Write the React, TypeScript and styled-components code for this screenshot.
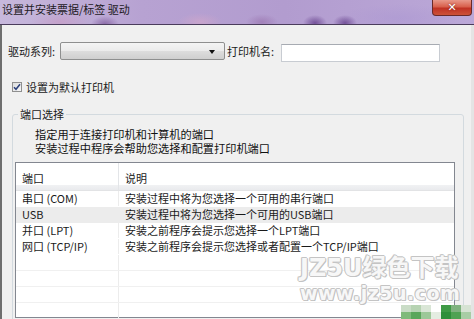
import React from "react";
import styled, { createGlobalStyle } from "styled-components";

const GlobalStyle = createGlobalStyle`
  html, body { margin: 0; padding: 0; background: #f0f0f0; }
  body { font-family: "Noto Sans CJK SC", "Liberation Sans", sans-serif; font-size: 11px; color: #1a1a1a; }
  * { box-sizing: border-box; }
`;

const Window = styled.div`
  width: 474px;
  height: 319px;
  overflow: hidden;
  display: flex;
  flex-direction: column;
  background: #f0f0f0;
`;

const TitleBar = styled.div`
  height: 25px;
  flex: none;
  display: flex;
  justify-content: space-between;
  align-items: flex-start;
  border-bottom: 1px solid #4a3c5c;
  background:
    radial-gradient(ellipse 14px 8px at 105px 24px, rgba(110, 70, 140, 0.6), transparent),
    radial-gradient(ellipse 12px 8px at 315px 23px, rgba(90, 50, 130, 0.7), transparent),
    radial-gradient(ellipse 12px 8px at 345px 23px, rgba(90, 50, 130, 0.7), transparent),
    radial-gradient(ellipse 16px 8px at 262px 22px, rgba(150, 110, 170, 0.6), transparent),
    radial-gradient(ellipse 30px 10px at 60px 22px, rgba(200, 150, 190, 0.55), transparent),
    radial-gradient(ellipse 22px 9px at 200px 22px, rgba(220, 170, 200, 0.5), transparent),
    radial-gradient(ellipse 60px 14px at 400px 18px, rgba(170, 150, 210, 0.5), transparent),
    linear-gradient(90deg, #c7b8dc 0%, #b7a2d2 30%, #b29ccf 60%, #bba8d8 100%);
`;

const Title = styled.div`
  padding: 3px 0 0 2px;
  font-size: 11px;
  line-height: 13px;
  color: #1e1a24;
`;

const CloseButton = styled.div`
  width: 40px;
  height: 16px;
  margin-right: 2px;
  border: 1px solid #6a2a28;
  border-top: none;
  border-radius: 0 0 4px 4px;
  background: linear-gradient(180deg, #e8988a 0%, #d8604c 45%, #c03224 55%, #cc5238 100%);
  display: flex;
  align-items: center;
  justify-content: center;
  color: #fff;
  font-family: "DejaVu Sans", sans-serif;
  font-weight: bold;
  font-size: 11px;
  line-height: 1;
  text-shadow: 0 0 2px #6a1a10;
`;

const Body = styled.div`
  flex: 1;
  position: relative;
  border-left: 2px solid #6e6e6e;
  border-right: 3px solid #e4e4e4;
  display: flex;
  flex-direction: column;
  overflow: hidden;
`;

const FieldRow = styled.div`
  display: flex;
  align-items: center;
  margin-top: 17px;
  padding-left: 6px;
  height: 18px;
`;

const Label = styled.span<{ $gap?: number }>`
  margin-left: ${(p) => p.$gap ?? 0}px;
  white-space: nowrap;
  line-height: 14px;
`;

const Combo = styled.div`
  width: 165px;
  height: 18px;
  margin-left: 5px;
  border: 1px solid #8e8f8f;
  border-radius: 2px;
  background: linear-gradient(180deg, #f4f4f4 0%, #ebebeb 50%, #dddddd 51%, #cfcfcf 100%);
  display: flex;
  align-items: center;
  justify-content: flex-end;
  padding-right: 9px;
`;

const Arrow = styled.div`
  width: 0;
  height: 0;
  border-left: 3px solid transparent;
  border-right: 3px solid transparent;
  border-top: 4px solid #111;
  margin-top: 1px;
`;

const TextInput = styled.div`
  width: 159px;
  height: 18px;
  margin-left: 7px;
  margin-top: 3px;
  background: #fff;
  border: 1px solid #c8ccd2;
  border-top-color: #a7abb2;
`;

const CheckRow = styled.div`
  display: flex;
  align-items: center;
  margin-top: 20px;
  padding-left: 10px;
  gap: 4px;
`;

const CheckBox = styled.div`
  width: 10px;
  height: 10px;
  border: 1px solid #8f8f8f;
  background: linear-gradient(135deg, #dcdcdc, #f6f6f6);
  display: flex;
  align-items: center;
  justify-content: center;
`;

const Group = styled.fieldset`
  margin: 14px 0 0 10px;
  padding: 0;
  width: 452px;
  border: 1px solid #d3dadf;
  border-radius: 3px;
  flex: none;
  height: 240px;
`;

const Legend = styled.legend`
  margin-left: 5px;
  padding: 0 2px;
  font-size: 11px;
  line-height: 13px;
`;

const Desc = styled.div`
  padding: 6px 0 0 22px;
  font-size: 11.2px;
  line-height: 14px;
  color: #111;
`;

const List = styled.div`
  margin: 7px 0 0 2px;
  width: 440px;
  height: 156px;
  border: 1px solid #838790;
  background: #fff;
  display: flex;
  flex-direction: column;
`;

const Header = styled.div`
  display: grid;
  grid-template-columns: 103px 1fr;
  height: 28px;
  flex: none;
  background: linear-gradient(180deg, #ffffff 0%, #ffffff 80%, #f1f2f4 81%, #e9eaed 100%);
  border-bottom: 1px solid #e2e3e5;
`;

const HeaderCell = styled.div<{ $sep?: boolean }>`
  display: flex;
  align-items: center;
  padding: 2px 0 0 6px;
  border-right: ${(p) => (p.$sep ? "1px solid #e3e5e8" : "none")};
`;

const Row = styled.div<{ $shade?: boolean; $line?: boolean }>`
  display: grid;
  grid-template-columns: 103px 1fr;
  height: 16px;
  flex: none;
  background: ${(p) => (p.$shade ? "#ececec" : "transparent")};
  border-bottom: 1px solid ${(p) => (p.$line ? "#f0f0f0" : "transparent")};
`;

const Cell = styled.div<{ $sep?: boolean }>`
  padding-left: 6px;
  line-height: 15px;
  white-space: nowrap;
  border-right: ${(p) => (p.$sep ? "1px solid #ececec" : "none")};
`;

const Watermark = styled.div`
  position: absolute;
  left: 298px;
  top: 229px;
  display: flex;
  flex-direction: column;
  align-items: flex-start;
  white-space: nowrap;
  pointer-events: none;
  font-family: "DejaVu Sans", "Noto Sans CJK SC", sans-serif;
  font-weight: bold;
  color: #f7f7f7;
  text-shadow: 1px 0 #c4c4c4, -1px 0 #c4c4c4, 0 1px #c4c4c4, 0 -1px #c4c4c4, 1px 1px #bdbdbd, -1px -1px #d0d0d0;
`;

const WmBig = styled.div`
  font-size: 24px;
  line-height: 28px;
`;

const WmSmall = styled.div`
  font-size: 19px;
  line-height: 22px;
  letter-spacing: 0.5px;
`;

const Mosaic = styled.svg`
  position: absolute;
  right: 0;
  bottom: 0;
`;

const rows = [
  { port: "串口 (COM)", desc: "安装过程中将为您选择一个可用的串行端口" },
  { port: "USB", desc: "安装过程中将为您选择一个可用的USB端口", shade: true },
  { port: "并口 (LPT)", desc: "安装之前程序会提示您选择一个LPT端口" },
  { port: "网口 (TCP/IP)", desc: "安装之前程序会提示您选择或者配置一个TCP/IP端口" },
];

export default function App() {
  return (
    <>
      <GlobalStyle />
      <Window>
        <TitleBar>
          <Title>设置并安装票据/标签 驱动</Title>
          <CloseButton>✕</CloseButton>
        </TitleBar>
        <Body>
          <FieldRow>
            <Label>驱动系列:</Label>
            <Combo>
              <Arrow />
            </Combo>
            <Label $gap={2}>打印机名:</Label>
            <TextInput />
          </FieldRow>
          <CheckRow>
            <CheckBox>
              <svg width="8" height="8" viewBox="0 0 8 8">
                <path d="M1 4.2 L3 6.3 L7 1.2" fill="none" stroke="#2a3f7a" strokeWidth="1.5" />
              </svg>
            </CheckBox>
            <Label>设置为默认打印机</Label>
          </CheckRow>
          <Group>
            <Legend>端口选择</Legend>
            <Desc>
              指定用于连接打印机和计算机的端口
              <br />
              安装过程中程序会帮助您选择和配置打印机端口
            </Desc>
            <List>
              <Header>
                <HeaderCell $sep>端口</HeaderCell>
                <HeaderCell>说明</HeaderCell>
              </Header>
              {rows.map((r) => (
                <Row key={r.port} $shade={r.shade}>
                  <Cell $sep>{r.port}</Cell>
                  <Cell>{r.desc}</Cell>
                </Row>
              ))}
              {[0, 1, 2, 3, 4].map((i) => (
                <Row key={"e" + i} $line>
                  <Cell $sep />
                  <Cell />
                </Row>
              ))}
            </List>
          </Group>
          <Watermark>
            <WmBig>JZ5U绿色下载</WmBig>
            <WmSmall>www.jz5u.com</WmSmall>
          </Watermark>
          <Mosaic width="70" height="14" viewBox="0 0 70 14">
            <rect x="0" y="0" width="10" height="7" fill="#c9dcc6" />
            <rect x="10" y="0" width="10" height="7" fill="#b6d3b2" />
            <rect x="20" y="0" width="10" height="7" fill="#d9e6d6" />
            <rect x="40" y="0" width="10" height="7" fill="#3f9a45" />
            <rect x="50" y="0" width="10" height="7" fill="#7fb27f" />
            <rect x="60" y="0" width="10" height="7" fill="#d6e3d3" />
            <rect x="0" y="7" width="10" height="7" fill="#7fba7a" />
            <rect x="10" y="7" width="10" height="7" fill="#5aa65a" />
            <rect x="20" y="7" width="10" height="7" fill="#9cc898" />
            <rect x="30" y="7" width="10" height="7" fill="#e4ede2" />
            <rect x="40" y="7" width="10" height="7" fill="#2f8f3a" />
            <rect x="50" y="7" width="10" height="7" fill="#4fa253" />
            <rect x="60" y="7" width="10" height="7" fill="#a8cda5" />
          </Mosaic>
        </Body>
      </Window>
    </>
  );
}
